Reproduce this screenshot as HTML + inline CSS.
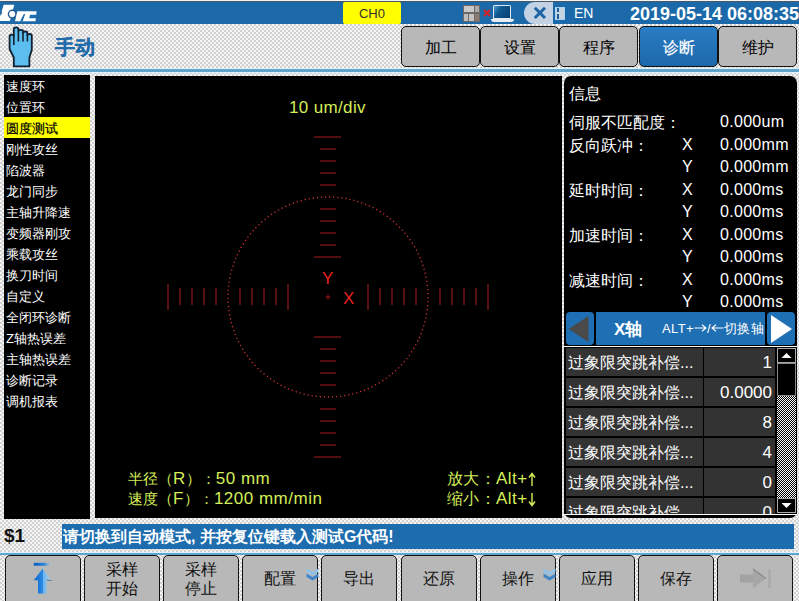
<!DOCTYPE html>
<html><head><meta charset="utf-8">
<style>
*{box-sizing:border-box;margin:0;padding:0}
html,body{width:799px;height:601px;overflow:hidden}
body{position:relative;font-family:"Liberation Sans",sans-serif;background-color:#dcdcdc;
background-image:repeating-conic-gradient(#d0d0d0 0 25%,#f5f5f5 0 50%);background-size:4px 4px}
.a{position:absolute}
.top{left:0;top:0;width:799px;height:24px;background:#1b69a8;border-top:1px solid #f4f4f4;box-shadow:inset 0 1px 0 #4a5866}
.tab{position:absolute;top:26px;height:41px;width:79px;background:#b8b8b8;border:1.5px solid #111;border-radius:5px;font-size:16px;color:#000;text-align:center;line-height:42px}
.tab.on{background:linear-gradient(#2a7cc4,#1d68aa);color:#fff;-webkit-text-stroke:0.2px #fff}
.hl{left:0;top:68px;width:799px;height:5px;background:#dcf3fb}
.hl2{left:0;top:69px;width:799px;height:3px;background:#62a5cb}
.blk{background:#000}
.menu div{position:absolute;left:0;width:86px;height:21px;font-size:13px;line-height:20px;color:#fff;padding-left:2px;white-space:nowrap}
.menu div.sel{background:#ffff00;color:#000;-webkit-text-stroke:0.2px #000}
.yl{color:#d4ee58;font-size:15px;white-space:nowrap;line-height:18px}
.L{font-weight:normal;font-size:17px;letter-spacing:0.5px}
.ar{font-weight:normal;font-size:15px}
.info{color:#fff;font-size:16px;white-space:nowrap}
.row{position:absolute;left:566px;width:209px;height:28px;background:#333}
.row .c1{position:absolute;left:0;top:0;width:138px;height:28px;border-right:1px solid #000;color:#fff;font-size:16px;line-height:30px;padding-left:2px;white-space:nowrap;overflow:hidden}
.row .c2{position:absolute;left:138px;top:0;width:71px;height:28px;color:#fff;font-size:17px;line-height:30px;text-align:right;padding-right:3px}
.btn{position:absolute;top:555px;width:76px;height:52px;background:#b8b8b8;border:1.5px solid #111;border-radius:5px;font-size:16px;color:#111;text-align:center}
</style></head><body>
<!-- top bar -->
<div class="a top"></div>
<!-- logo -->
<svg class="a" style="left:0;top:0" width="40" height="24" viewBox="0 0 40 24">
<path d="M3.7 4.7 H14.3 L9.9 21.1 H0 V16.5 Z" fill="#fff"/>
<path d="M0 11.8 H2.2 L1.6 14.6 H0 Z" fill="#2a6aa8"/>
<circle cx="12.2" cy="14.1" r="4.5" fill="#1f5a94"/>
<circle cx="12.2" cy="14.1" r="3.1" fill="#fff"/>
<path d="M17.3 11.2 H36.6 L35.5 21.3 H15 Z" fill="#fff"/>
<path d="M30 14.8 H37 V18.2 H29.2 Z" fill="#1d6cae"/>
<path d="M20 21.6 H22.6 L25.2 14 H23.8 Z" fill="#1d6cae"/>
</svg>
<div class="a" style="left:343px;top:2px;width:58px;height:22px;background:#ffff00;border-radius:2px;font-size:13px;color:#333;text-align:center;line-height:23px">CH0</div>
<!-- status icons -->
<div class="a" style="left:463px;top:5px;width:17px;height:17px;background:#6e6a6a"></div>
<div class="a" style="left:464px;top:6px;width:10px;height:6px;background:#c9c9c9"></div>
<div class="a" style="left:475px;top:6px;width:4px;height:6px;background:#a9a9a9"></div>
<div class="a" style="left:464px;top:14px;width:4px;height:7px;background:#bdbdbd"></div>
<div class="a" style="left:469px;top:14px;width:5px;height:7px;background:#c4c4c4"></div>
<div class="a" style="left:475px;top:14px;width:4px;height:7px;background:#8a7a74"></div>
<svg class="a" style="left:483px;top:9px" width="8" height="8"><path d="M1 1 L7 7 M7 1 L1 7" stroke="#d42222" stroke-width="2"/></svg>
<div class="a" style="left:493px;top:5px;width:18px;height:14px;background:#dfe8f0;border-radius:1.5px 1.5px 0 0"></div>
<div class="a" style="left:494px;top:6px;width:16px;height:12px;background:linear-gradient(120deg,#4b9ad0 0%,#0e5a92 35%,#0a3f70 100%)"></div>
<div class="a" style="left:491px;top:19px;width:23px;height:3px;background:#e6ecf2;border-radius:0 0 3px 3px"></div>
<div class="a" style="left:524px;top:2px;width:29px;height:22px;background:#c3d2e3;border-radius:11px 0 0 11px"></div>
<svg class="a" style="left:533px;top:6px" width="14" height="14"><path d="M1.8 1.8 L12 12 M12 1.8 L1.8 12" stroke="#1d64a4" stroke-width="3"/></svg>
<div class="a" style="left:555px;top:7px;width:10px;height:13px;background:#a8d0f0"></div>
<div class="a" style="left:556px;top:8px;width:8px;height:11px;background:#c6d4e2"></div>
<div class="a" style="left:557px;top:8px;width:2px;height:4px;background:#1d5f9a"></div>
<div class="a" style="left:557px;top:14px;width:2px;height:5px;background:#1d5f9a"></div>
<div class="a" style="left:574px;top:5px;font-size:14px;color:#fff">EN</div>
<div class="a" style="left:630px;top:4px;font-size:18px;font-weight:bold;color:#fff;white-space:nowrap">2019-05-14 06:08:35</div>

<!-- hand icon -->
<svg class="a" style="left:0;top:0" width="40" height="70">
<path d="M13.8 66.3 V57.5 L9.6 49 V36.2 Q9.6 34.6 11.7 34.6 Q13.8 34.6 13.8 36.2 V29 Q13.8 27.3 16.1 27.3 Q18.4 27.3 18.4 29 V31 Q18.4 29.8 20.7 29.8 Q23 29.8 23 31.2 V32.8 Q23 31.5 25.2 31.5 Q27.4 31.5 27.4 33 V35.2 Q27.4 34 29.6 34 Q31.8 34 31.8 35.6 V50 L29.4 57.5 V66.3 Z" fill="#5cbdef" stroke="#102030" stroke-width="1.8" stroke-linejoin="round"/>
<path d="M13.8 35.5 V45 M18.4 30.5 V41.5 M23 32 V41.5 M27.4 34.5 V41.5" stroke="#102030" stroke-width="1.6"/>
</svg>
<div class="a" style="left:55px;top:34px;font-size:20px;font-weight:bold;color:#1e6aab;-webkit-text-stroke:0.15px #1e6aab">手动</div>

<!-- tabs -->
<div class="tab" style="left:401px">加工</div>
<div class="tab" style="left:480px">设置</div>
<div class="tab" style="left:559px">程序</div>
<div class="tab on" style="left:639px">诊断</div>
<div class="tab" style="left:718px">维护</div>
<div class="a hl"></div>
<div class="a hl2"></div>

<!-- left menu -->
<div class="a blk menu" style="left:4px;top:75px;width:86px;height:444px">
<div style="top:2px">速度环</div>
<div style="top:23px">位置环</div>
<div class="sel" style="top:42px;height:21px;padding-top:2px">圆度测试</div>
<div style="top:65px">刚性攻丝</div>
<div style="top:86px">陷波器</div>
<div style="top:107px">龙门同步</div>
<div style="top:128px">主轴升降速</div>
<div style="top:149px">变频器刚攻</div>
<div style="top:170px">乘载攻丝</div>
<div style="top:191px">换刀时间</div>
<div style="top:212px">自定义</div>
<div style="top:233px">全闭环诊断</div>
<div style="top:254px">Z轴热误差</div>
<div style="top:275px">主轴热误差</div>
<div style="top:296px">诊断记录</div>
<div style="top:317px">调机报表</div>
</div>

<!-- center -->
<div class="a blk" style="left:95px;top:76px;width:467px;height:442px"></div>
<div class="a yl" style="left:289px;top:99px;font-size:17px;letter-spacing:0.35px">10 um/div</div>
<svg class="a" style="left:95px;top:75px" width="467" height="443">
<g stroke="#6c1515" stroke-width="1.6">
<path d="M219 62 H246 M225 74 H241 M225 86 H241 M225 98 H241 M225 110 H241 M225 134 H241 M225 146 H241 M225 158 H241 M225 170 H241 M219 182 H246"/>
<path d="M219 262 H246 M225 274 H241 M225 286 H241 M225 298 H241 M225 310 H241 M225 334 H241 M225 346 H241 M225 358 H241 M225 370 H241 M219 382 H246"/>
<path d="M73 209 V235 M85 213 V230 M97 213 V230 M109 213 V230 M121 213 V230 M145 213 V230 M157 213 V230 M169 213 V230 M181 213 V230 M193 209 V235"/>
<path d="M273 209 V235 M285 213 V230 M297 213 V230 M309 213 V230 M321 213 V230 M345 213 V230 M357 213 V230 M369 213 V230 M381 213 V230 M393 209 V235"/>
</g>
<circle cx="233" cy="222" r="100" fill="none" stroke="#d23434" stroke-width="1.3" stroke-dasharray="1.2 2.9"/>
<path d="M230.5 222 H235.5 M233 219.5 V224.5" stroke="#a01818" stroke-width="1"/>
</svg>
<div class="a" style="left:322px;top:269px;font-size:17px;color:#e52222">Y</div>
<div class="a" style="left:343px;top:289px;font-size:17px;color:#e52222">X</div>
<div class="a yl" style="left:128px;top:470px">半径（<b class="L">R</b>）：<b class="L">50 mm</b></div>
<div class="a yl" style="left:128px;top:490px">速度（<b class="L">F</b>）：<b class="L">1200 mm/min</b></div>
<div class="a yl" style="left:447px;top:470px;font-size:16px;letter-spacing:0.3px">放大：<b class="L">Alt+</b></div><svg class="a" style="left:528px;top:472px" width="8" height="15"><path d="M4 14 V2 M1 5.5 L4 1.5 L7 5.5" stroke="#d4ee58" stroke-width="1.4" fill="none"/></svg>
<div class="a yl" style="left:447px;top:490px;font-size:16px;letter-spacing:0.3px">缩小：<b class="L">Alt+</b></div><svg class="a" style="left:528px;top:492px" width="8" height="15"><path d="M4 1 V13 M1 9.5 L4 13.5 L7 9.5" stroke="#d4ee58" stroke-width="1.4" fill="none"/></svg>

<!-- right panel -->
<div class="a blk" style="left:564px;top:76px;width:233px;height:442px;border-radius:7px"></div>
<div class="a info" style="left:569px;top:84px">信息</div>
<div class="a info" style="left:569px;top:113px">伺服不匹配度：</div>
<div class="a info" style="letter-spacing:0.3px;left:720px;top:113px">0.000um</div>
<div class="a info" style="left:569px;top:136px">反向跃冲：</div>
<div class="a info" style="left:682px;top:136px">X</div>
<div class="a info" style="letter-spacing:0.3px;left:720px;top:136px">0.000mm</div>
<div class="a info" style="left:682px;top:158px">Y</div>
<div class="a info" style="letter-spacing:0.3px;left:720px;top:158px">0.000mm</div>
<div class="a info" style="left:569px;top:181px">延时时间：</div>
<div class="a info" style="left:682px;top:181px">X</div>
<div class="a info" style="letter-spacing:0.3px;left:720px;top:181px">0.000ms</div>
<div class="a info" style="left:682px;top:203px">Y</div>
<div class="a info" style="letter-spacing:0.3px;left:720px;top:203px">0.000ms</div>
<div class="a info" style="left:569px;top:226px">加速时间：</div>
<div class="a info" style="left:682px;top:226px">X</div>
<div class="a info" style="letter-spacing:0.3px;left:720px;top:226px">0.000ms</div>
<div class="a info" style="left:682px;top:248px">Y</div>
<div class="a info" style="letter-spacing:0.3px;left:720px;top:248px">0.000ms</div>
<div class="a info" style="left:569px;top:271px">减速时间：</div>
<div class="a info" style="left:682px;top:271px">X</div>
<div class="a info" style="letter-spacing:0.3px;left:720px;top:271px">0.000ms</div>
<div class="a info" style="left:682px;top:293px">Y</div>
<div class="a info" style="letter-spacing:0.3px;left:720px;top:293px">0.000ms</div>

<!-- axis bar -->
<div class="a" style="left:566px;top:312px;width:28px;height:33px;background:#1f6fb5;border-radius:4px"></div>
<svg class="a" style="left:566px;top:312px" width="28" height="33"><path d="M2.5 17 L22.5 4 V30 Z" fill="#4a4a4a"/></svg>
<div class="a" style="left:596px;top:312px;width:169px;height:33px;background:#1f6fb5"></div>
<div class="a" style="left:614px;top:318px;font-size:17px;font-weight:bold;color:#fff">X轴</div>
<div class="a" style="left:662px;top:320px;font-size:13px;color:#fff;white-space:nowrap;letter-spacing:0.4px">ALT+<svg width="13" height="12" style="vertical-align:-1px;margin:0 0 0 0"><path d="M0.5 6 H11.5 M8 2.8 L12 6 L8 9.2" stroke="#fff" stroke-width="1.1" fill="none"/></svg>/<svg width="13" height="12" style="vertical-align:-1px"><path d="M1.5 6 H12.5 M5 2.8 L1 6 L5 9.2" stroke="#fff" stroke-width="1.1" fill="none"/></svg>切换轴</div>
<div class="a" style="left:767px;top:312px;width:28px;height:33px;background:#1f6fb5;border-radius:4px"></div>
<svg class="a" style="left:767px;top:312px" width="28" height="33"><path d="M4 3 L25 17 L4 31 Z" fill="#fff"/></svg>

<!-- table -->
<div class="a" style="left:563px;top:346px;width:234px;height:169px;border-top:1px solid #fff;border-left:1px solid #ddd;border-bottom:1px solid #fff;background:#000;overflow:hidden">
</div>
<div class="row" style="top:348px"><div class="c1">过象限突跳补偿...</div><div class="c2">1</div></div>
<div class="row" style="top:378px"><div class="c1">过象限突跳补偿...</div><div class="c2">0.0000</div></div>
<div class="row" style="top:408px"><div class="c1">过象限突跳补偿...</div><div class="c2">8</div></div>
<div class="row" style="top:438px"><div class="c1">过象限突跳补偿...</div><div class="c2">4</div></div>
<div class="row" style="top:468px"><div class="c1">过象限突跳补偿...</div><div class="c2">0</div></div>
<div class="row" style="top:498px;height:16px;overflow:hidden"><div class="c1">过象限突跳补偿...</div><div class="c2">0</div></div>
<!-- scrollbar -->
<div class="a" style="left:777px;top:363px;width:19px;height:136px;background-color:#808080;background-image:repeating-conic-gradient(#000 0 25%,#fff 0 50%);background-size:2px 2px"></div>
<div class="a" style="left:777px;top:348px;width:19px;height:15px;background:#000;border:1px solid #aaa"></div>
<svg class="a" style="left:777px;top:348px" width="19" height="15"><path d="M4.5 10 L9.5 5 L14.5 10 Z" fill="#fff"/></svg>
<div class="a" style="left:777px;top:363px;width:19px;height:33px;background:#000;border:1px solid #888"></div>
<div class="a" style="left:777px;top:498px;width:19px;height:15px;background:#000;border:1px solid #aaa"></div>
<svg class="a" style="left:777px;top:498px" width="19" height="15"><path d="M4.5 5 L9.5 10 L14.5 5 Z" fill="#fff"/></svg>

<!-- status bar -->
<div class="a" style="left:4px;top:525px;font-size:19px;font-weight:bold;color:#111">$1</div>
<div class="a" style="left:62px;top:524px;width:732px;height:25px;background:#1d6cae"></div>
<div class="a" style="left:63px;top:527px;font-size:16px;font-weight:bold;color:#fff;white-space:nowrap">请切换到自动模式<span style="font-family:'Liberation Sans'">, </span>并按复位键载入测试G代码!</div>
<div class="a" style="left:0;top:552px;width:799px;height:3px;background:#dff2fb"></div>
<div class="a" style="left:0;top:553px;width:799px;height:2px;background:#5ea6cf"></div>

<!-- bottom buttons -->
<div class="btn" style="left:4.5px"></div>
<svg class="a" style="left:30px;top:562px" width="24" height="34">
<defs><linearGradient id="g1" x1="0" x2="1"><stop offset="0" stop-color="#0b62c8"/><stop offset="0.5" stop-color="#2a8ae6"/><stop offset="0.55" stop-color="#6ab2f2"/><stop offset="1" stop-color="#b4d2ea"/></linearGradient>
<linearGradient id="g2" x1="0" x2="1"><stop offset="0" stop-color="#0b5cc0"/><stop offset="0.6" stop-color="#2f86d8"/><stop offset="1" stop-color="#b8cadb" stop-opacity="0.3"/></linearGradient></defs>
<rect x="3.8" y="0.8" width="17.6" height="3" fill="url(#g2)"/>
<path d="M12.5 6.7 L3.8 18.3 H8 V31.4 H16.6 V18.3 H21.4 Z" fill="url(#g1)"/>
<path d="M17 18.3 H21.5" stroke="#556" stroke-width="0.8"/>
</svg>
<div class="btn" style="left:83.7px;line-height:19px;padding-top:4px">采样<br>开始</div>
<div class="btn" style="left:162.9px;line-height:19px;padding-top:4px">采样<br>停止</div>
<div class="btn" style="left:242.1px;line-height:46px">配置</div>
<div class="btn" style="left:321.3px;line-height:46px">导出</div>
<div class="btn" style="left:400.5px;line-height:46px">还原</div>
<div class="btn" style="left:479.7px;line-height:46px">操作</div>
<div class="btn" style="left:558.9px;line-height:46px">应用</div>
<div class="btn" style="left:638.1px;line-height:46px">保存</div>
<div class="btn" style="left:717.3px"></div>
<svg class="a" style="left:306px;top:568px" width="14" height="14"><path d="M0.5 0.5 L6.5 4 L12.5 0.5 V4 L6.5 7.5 L0.5 4 Z" fill="#8fc2ea"/><path d="M0.5 5.5 L6.5 9 L12.5 5.5 V9 L6.5 12.5 L0.5 9 Z" fill="#3f86c8"/></svg>
<svg class="a" style="left:543px;top:568px" width="14" height="14"><path d="M0.5 0.5 L6.5 4 L12.5 0.5 V4 L6.5 7.5 L0.5 4 Z" fill="#8fc2ea"/><path d="M0.5 5.5 L6.5 9 L12.5 5.5 V9 L6.5 12.5 L0.5 9 Z" fill="#3f86c8"/></svg>
<svg class="a" style="left:738px;top:566px" width="36" height="24">
<rect x="2" y="8.5" width="14" height="8" fill="#a2a2a2"/>
<path d="M15 3 L28 12.5 L15 22 Z" fill="#a6a6a6"/>
<path d="M15 3 L28 12.5" stroke="#8e8e8e" stroke-width="1.5"/>
<rect x="30" y="3" width="3" height="19" fill="#acacac"/>
</svg>
</body></html>
